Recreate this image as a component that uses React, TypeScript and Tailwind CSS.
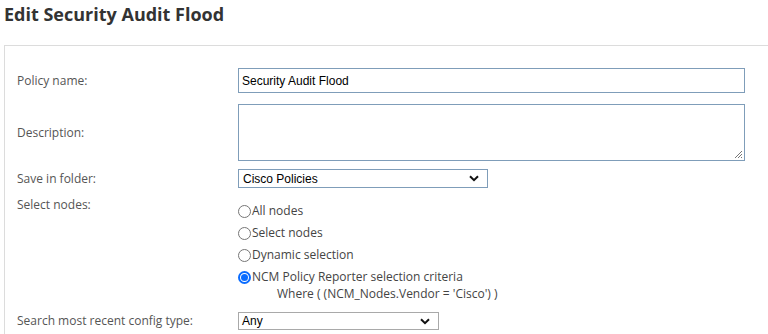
import React from "react";

const Chevron = () => (
  <svg width="10" height="7" viewBox="0 0 10 7" className="shrink-0">
    <path d="M1 1.2 L5 5.2 L9 1.2" fill="none" stroke="#111" strokeWidth="2" />
  </svg>
);

const Radio = ({ checked, label }: { checked?: boolean; label: string }) => (
  <div className="flex items-center h-[22px]">
    {checked ? (
      <span className="w-[13px] h-[13px] rounded-full border-2 border-[#0a6cff] bg-white flex items-center justify-center">
        <span className="w-[7px] h-[7px] rounded-full bg-[#0a6cff]" />
      </span>
    ) : (
      <span className="w-[13px] h-[13px] rounded-full border border-[#767676] bg-white" />
    )}
    <span className="ml-[1px] text-[12px] text-[#444]">{label}</span>
  </div>
);

export default function App() {
  return (
    <div
      className="w-[768px] h-[334px] overflow-hidden bg-white text-[#555]"
      style={{ fontFamily: '"Open Sans", Arial, sans-serif' }}
    >
      <h1 className="pl-[4px] pt-[2px] text-[18px] leading-[24px] font-bold text-[#333]">
        Edit Security Audit Flood
      </h1>
      <div className="ml-[4px] mt-[19px] w-[800px] border border-[#dcdcdc] pl-[12px] pt-[22px] pb-4">
        <div className="flex items-center h-[25px]">
          <div className="w-[221px] text-[12px]">Policy name:</div>
          <div
            className="w-[507px] h-[25px] border border-[#7f9db9] flex items-center pl-[3px] text-[12px] text-black"
            style={{ fontFamily: '"Liberation Sans", Arial, sans-serif' }}
          >
            Security Audit Flood
          </div>
        </div>
        <div className="flex items-center h-[57px] mt-[11px]">
          <div className="w-[221px] text-[12px]">Description:</div>
          <div className="relative w-[507px] h-[57px] border border-[#7f9db9]">
            <svg width="9" height="9" viewBox="0 0 9 9" className="absolute right-[1px] bottom-[1px]">
              <path d="M8 1 L1 8 M8 4 L4 8 M8 7 L7 8" stroke="#777" strokeWidth="1" />
            </svg>
          </div>
        </div>
        <div className="flex items-center h-[19px] mt-[8px]">
          <div className="w-[221px] text-[12px]">Save in folder:</div>
          <div
            className="w-[250px] h-[19px] border border-[#7f9db9] flex items-center justify-between pl-[4px] pr-[8px] text-[12px] text-black"
            style={{ fontFamily: '"Liberation Sans", Arial, sans-serif' }}
          >
            <span>Cisco Policies</span>
            <Chevron />
          </div>
        </div>
        <div className="flex mt-[6px]">
          <div className="w-[221px] text-[12px] pt-[2px]">Select nodes:</div>
          <div className="pt-[6px]">
            <Radio label="All nodes" />
            <Radio label="Select nodes" />
            <Radio label="Dynamic selection" />
            <Radio checked label="NCM Policy Reporter selection criteria" />
            <div className="pl-[39px] text-[12px] leading-[14px] text-[#444] -mt-[1px]">
              Where ( (NCM_Nodes.Vendor = 'Cisco') )
            </div>
          </div>
        </div>
        <div className="flex items-center h-[18px] mt-[11px]">
          <div className="w-[221px] text-[12px]">Search most recent config type:</div>
          <div
            className="w-[201px] h-[18px] border border-[#a9a9a9] flex items-center justify-between pl-[3px] pr-[8px] text-[12px] text-black"
            style={{ fontFamily: '"Liberation Sans", Arial, sans-serif' }}
          >
            <span>Any</span>
            <Chevron />
          </div>
        </div>
      </div>
    </div>
  );
}
